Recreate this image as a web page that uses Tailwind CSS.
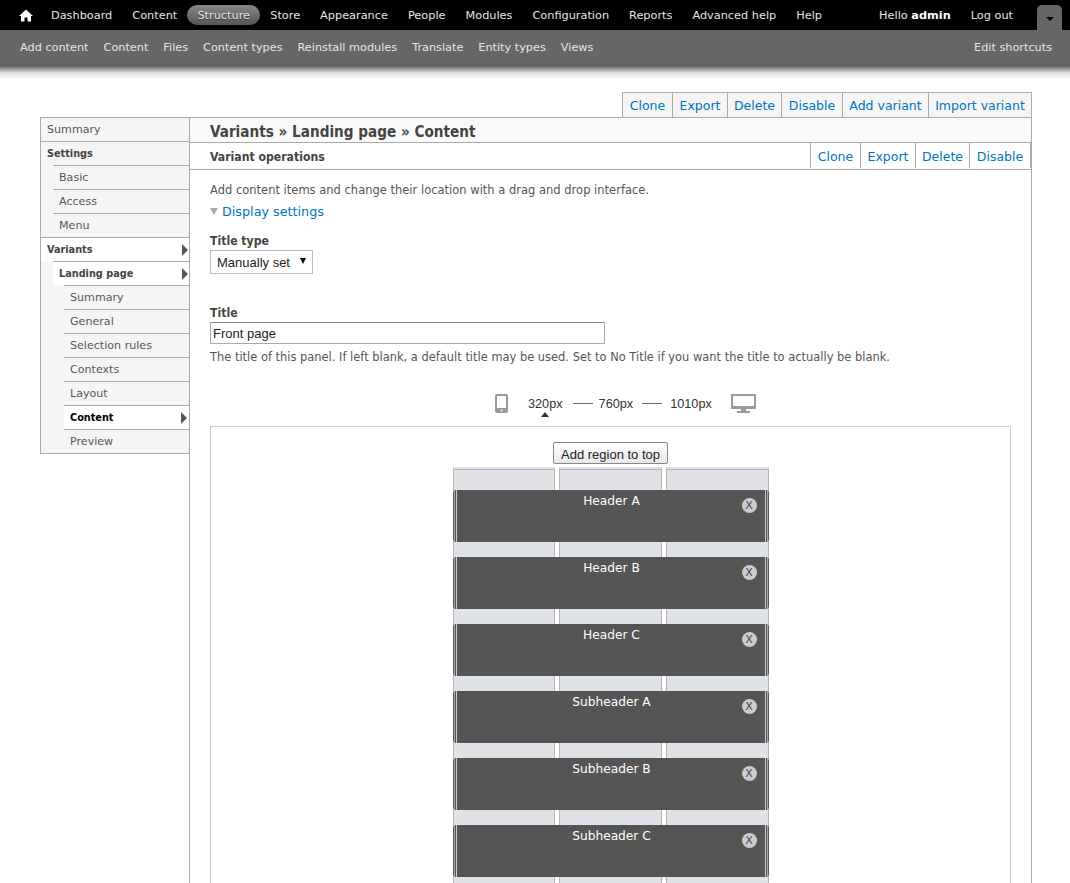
<!DOCTYPE html>
<html lang="en">
<head>
    <meta charset="UTF-8">
    <title>Variants » Landing page » Content</title>
    <script src="https://cdn.jsdelivr.net/npm/@tailwindcss/browser@4"></script>
</head>
<body class="h-[883px] overflow-hidden bg-white font-['DejaVu_Sans',sans-serif] text-[11.5px] text-[#555]">
    <!-- Admin toolbar -->
    <div class="h-[30px] bg-black flex items-center text-[11.3px] text-[#e5e5e5] pl-[19px]">
        <svg class="w-[14px] h-[13px] mr-[18px]" viewBox="0 0 14 13" fill="#fff"><path d="M7 0.5 L14 7 H12 V12.5 H8.5 V8.5 H5.5 V12.5 H2 V7 H0 Z"/></svg>
        <a class="mr-[20px] pt-[2px]">Dashboard</a>
        <a class="mr-[10px] pt-[2px]">Content</a>
        <a class="h-[20px] w-[73px] mr-[10px] pt-[2px] flex items-center justify-center rounded-full bg-gradient-to-b from-[#888] to-[#555] [text-shadow:0_1px_1px_#333]">Structure</a>
        <a class="mr-[20px] pt-[2px]">Store</a>
        <a class="mr-[20px] pt-[2px]">Appearance</a>
        <a class="mr-[20px] pt-[2px]">People</a>
        <a class="mr-[20px] pt-[2px]">Modules</a>
        <a class="mr-[20px] pt-[2px]">Configuration</a>
        <a class="mr-[20px] pt-[2px]">Reports</a>
        <a class="mr-[20px] pt-[2px]">Advanced help</a>
        <a class="pt-[2px]">Help</a>
        <span class="ml-auto pt-[2px]">Hello <b class="font-bold text-white">admin</b></span>
        <a class="ml-[20px] pt-[2px]">Log out</a>
        <div class="ml-[24px] mr-[8px] mt-[5px] w-[25px] h-[25px] bg-[#666] rounded-t-[5px] flex items-center justify-center">
            <div class="w-0 h-0 mt-[3px] border-x-[4px] border-x-transparent border-t-[4px] border-t-black"></div>
        </div>
    </div>
    <div class="h-[35px] bg-[#666] flex items-center text-[11.27px] text-[#e5e5e5] pt-[2px] px-[18px] pl-[20px] gap-[15px]">
        <a>Add content</a>
        <a>Content</a>
        <a>Files</a>
        <a>Content types</a>
        <a>Reinstall modules</a>
        <a>Translate</a>
        <a>Entity types</a>
        <a>Views</a>
        <a class="ml-auto">Edit shortcuts</a>
    </div>
    <div class="h-[15px] bg-gradient-to-b from-[#555] via-[#ddd] via-50% to-white"></div>

    <div class="w-[992px] ml-[40px] mt-[12px]">
        <!-- Top tabs -->
        <div class="flex justify-end">
            <div class="flex h-[25px] border border-b-0 border-[#aaa] bg-[#f5f5f5] text-[12.5px] text-[#0074bd] leading-[25px] divide-x divide-[#aaa]">
                <a class="w-[50px] text-center">Clone</a>
                <a class="w-[55px] text-center">Export</a>
                <a class="w-[54px] text-center">Delete</a>
                <a class="w-[61px] text-center">Disable</a>
                <a class="w-[86px] text-center">Add variant</a>
                <a class="w-[102px] text-center">Import variant</a>
            </div>
        </div>

        <div class="flex items-start border-t border-[#aaa] h-[800px]">
            <!-- Left menu -->
            <div class="w-[149px] shrink-0 bg-[#f5f5f5] border-l border-b border-[#aaa] leading-[23px] text-[11.1px]">
                <div class="h-[24px] pl-[6px] border-b border-[#aaa]">Summary</div>
                <div class="h-[23px] pl-[6px] font-bold text-[10.8px] text-[#444] font-['DejaVu_Sans_Condensed','DejaVu_Sans',sans-serif]">Settings</div>
                <div class="pl-[12px]">
                    <div class="h-[25px] pl-[6px] border-y border-[#aaa]">Basic</div>
                    <div class="h-[24px] pl-[6px] border-b border-[#aaa]">Access</div>
                    <div class="h-[23px] pl-[6px]">Menu</div>
                </div>
                <div class="h-[24px] pl-[6px] border-t border-[#aaa] font-bold text-[10.8px] text-[#444] font-['DejaVu_Sans_Condensed','DejaVu_Sans',sans-serif] bg-white flex justify-between items-center">Variants
                    <div class="w-0 h-0 mr-[1px] border-y-[6px] border-y-transparent border-l-[6px] border-l-[#555]"></div>
                </div>
                <div class="pl-[12px]">
                    <div class="h-[24px] pl-[6px] border-t border-[#aaa] font-bold text-[10.8px] text-[#444] font-['DejaVu_Sans_Condensed','DejaVu_Sans',sans-serif] bg-white flex justify-between items-center">Landing page
                        <div class="w-0 h-0 mr-[1px] border-y-[6px] border-y-transparent border-l-[6px] border-l-[#555]"></div>
                    </div>
                    <div class="pl-[11px]">
                        <div class="h-[25px] pl-[6px] border-y border-[#aaa]">Summary</div>
                        <div class="h-[24px] pl-[6px] border-b border-[#aaa]">General</div>
                        <div class="h-[24px] pl-[6px] border-b border-[#aaa]">Selection rules</div>
                        <div class="h-[24px] pl-[6px] border-b border-[#aaa]">Contexts</div>
                        <div class="h-[24px] pl-[6px] border-b border-[#aaa]">Layout</div>
                        <div class="h-[24px] pl-[6px] border-b border-[#aaa] font-bold text-[10.8px] text-black font-['DejaVu_Sans_Condensed','DejaVu_Sans',sans-serif] bg-white flex justify-between items-center">Content
                            <div class="w-0 h-0 mr-[2px] border-y-[6px] border-y-transparent border-l-[6px] border-l-[#555]"></div>
                        </div>
                        <div class="h-[23px] pl-[6px]">Preview</div>
                    </div>
                </div>
            </div>

            <!-- Main panel -->
            <div class="flex-1 h-full border-l border-r border-[#aaa]">
                <h1 class="h-[25px] pl-[20px] bg-[#f9f9f9] border-b border-[#aaa] text-[15.15px] leading-[28px] font-bold text-[#444] font-['DejaVu_Sans_Condensed','DejaVu_Sans',sans-serif]">Variants » Landing page » Content</h1>
                <div class="flex justify-between h-[27px] border-b border-[#aaa]">
                    <div class="pl-[20px] text-[12.15px] leading-[28px] font-bold text-[#444] font-['DejaVu_Sans_Condensed','DejaVu_Sans',sans-serif]">Variant operations</div>
                    <div class="flex text-[12.5px] text-[#0074bd] leading-[28px] bg-white h-[25px] border-l border-r border-[#aaa] divide-x divide-[#aaa]">
                        <a class="w-[50px] text-center">Clone</a>
                        <a class="w-[55px] text-center">Export</a>
                        <a class="w-[54px] text-center">Delete</a>
                        <a class="w-[60px] text-center">Disable</a>
                    </div>
                </div>

                <div class="px-[20px]">
                    <p class="mt-[12px] leading-[16px]">Add content items and change their location with a drag and drop interface.</p>
                    <div class="mt-[6px] flex items-center gap-[4px] h-[16px]">
                        <div class="w-0 h-0 mb-[2px] border-x-[4px] border-x-transparent border-t-[7px] border-t-[#aaa]"></div>
                        <a class="text-[12.75px] text-[#0074bd]">Display settings</a>
                    </div>

                    <label class="block mt-[13px] leading-[16px] text-[12.15px] font-bold text-[#444] font-['DejaVu_Sans_Condensed','DejaVu_Sans',sans-serif]">Title type</label>
                    <div class="relative mt-[1px] w-[103px]">
                        <select class="block appearance-none w-full h-[24px] pl-[6px] pt-[2px] bg-white border border-[#bbb] text-[13px] text-[#222] font-['Liberation_Sans',sans-serif]">
                            <option>Manually set</option>
                        </select>
                        <div class="absolute right-[7px] top-[8px] w-0 h-0 border-x-[3px] border-x-transparent border-t-[6px] border-t-black"></div>
                    </div>

                    <label class="block mt-[31px] leading-[16px] text-[12.15px] font-bold text-[#444] font-['DejaVu_Sans_Condensed','DejaVu_Sans',sans-serif]">Title</label>
                    <input type="text" value="Front page" class="block mt-[1px] w-[395px] h-[22px] px-[2px] border border-[#aaa] border-t-[#888] text-[13px] text-[#222] font-['Liberation_Sans',sans-serif]">
                    <p class="mt-[5px] leading-[16px] text-[11.45px]">The title of this panel. If left blank, a default title may be used. Set to No Title if you want the title to actually be blank.</p>

                    <!-- Breakpoint switcher -->
                    <div class="mt-[27px] h-[28px] pl-[285px] flex items-start text-[12.7px] text-[#333] font-['Liberation_Sans',sans-serif]">
                        <svg class="w-[13px] h-[19px] mt-[2px] mr-[20px]" viewBox="0 0 13 19"><rect width="13" height="19" rx="2" fill="#999"/><rect x="2" y="2" width="9" height="12" fill="#fff"/><circle cx="6.5" cy="16.5" r="1" fill="#fff"/></svg>
                        <div class="relative mt-[4px] leading-[16px]">320px
                            <div class="absolute left-[13px] top-[16px] w-0 h-0 border-x-[4px] border-x-transparent border-b-[5px] border-b-[#333]"></div>
                        </div>
                        <div class="w-[20px] h-px bg-[#666] ml-[10px] mr-[6px] mt-[11px]"></div>
                        <div class="mt-[4px] leading-[16px]">760px</div>
                        <div class="w-[20px] h-px bg-[#666] ml-[9px] mr-[8px] mt-[11px]"></div>
                        <div class="mt-[4px] leading-[16px]">1010px</div>
                        <svg class="w-[25px] h-[19px] mt-[2px] ml-[19px]" viewBox="0 0 25 19"><rect width="25" height="15" rx="1" fill="#999"/><rect x="2" y="2" width="21" height="10" fill="#fff"/><rect x="10" y="15" width="5" height="2" fill="#999"/><rect x="6" y="17" width="13" height="2" fill="#999"/></svg>
                    </div>

                    <!-- Layout canvas -->
                    <div class="w-[801px] mt-[6px] h-[600px] border border-[#ccc] flex flex-col items-center">
                        <button class="mt-[15px] w-[115px] h-[22px] pt-[2px] border border-[#888] rounded-[2px] bg-gradient-to-b from-white to-[#e8e8e8] text-[13px] text-[#222] font-['Liberation_Sans',sans-serif]">Add region to top</button>
                        <div class="relative w-[316px] mt-[3px] h-[500px]">
                            <div class="absolute inset-0 grid grid-cols-[102px_103px_103px] gap-x-[4px]">
                                <div class="bg-[#dfe2e6] border-x border-t-2 border-x-[#b5b5b5] border-t-[#e3e3e3] shadow-[inset_0_1px_0_#b5b5b5]"></div>
                                <div class="bg-[#dfe2e6] border-x border-t-2 border-x-[#b5b5b5] border-t-[#e3e3e3] shadow-[inset_0_1px_0_#b5b5b5]"></div>
                                <div class="bg-[#dfe2e6] border-x border-t-2 border-x-[#b5b5b5] border-t-[#e3e3e3] shadow-[inset_0_1px_0_#b5b5b5]"></div>
                            </div>
                            <div class="relative pt-[23px] flex flex-col gap-[15px] text-[12.2px] text-white text-center">
                                <div class="relative h-[52px] pl-[2px] bg-[#555] rounded-[4px] leading-[22px] overflow-hidden">Header A
                                    <div class="absolute left-0 top-0 bottom-0 w-[5px] bg-[linear-gradient(90deg,#555_0_1px,#aaa_1px_2px,#555_2px_3px,#ccc_3px_4px,#555_4px)]"></div>
                                    <div class="absolute right-0 top-0 bottom-0 w-[5px] bg-[linear-gradient(270deg,#555_0_1px,#aaa_1px_2px,#555_2px_3px,#ccc_3px_4px,#555_4px)]"></div>
                                    <div class="absolute right-[12px] top-[8px] w-[15px] h-[15px] rounded-full bg-[#ccc] text-[#446] text-[11px] leading-[15px]">X</div>
                                </div>
                                <div class="relative h-[52px] pl-[2px] bg-[#555] rounded-[4px] leading-[22px] overflow-hidden">Header B
                                    <div class="absolute left-0 top-0 bottom-0 w-[5px] bg-[linear-gradient(90deg,#555_0_1px,#aaa_1px_2px,#555_2px_3px,#ccc_3px_4px,#555_4px)]"></div>
                                    <div class="absolute right-0 top-0 bottom-0 w-[5px] bg-[linear-gradient(270deg,#555_0_1px,#aaa_1px_2px,#555_2px_3px,#ccc_3px_4px,#555_4px)]"></div>
                                    <div class="absolute right-[12px] top-[8px] w-[15px] h-[15px] rounded-full bg-[#ccc] text-[#446] text-[11px] leading-[15px]">X</div>
                                </div>
                                <div class="relative h-[52px] pl-[2px] bg-[#555] rounded-[4px] leading-[22px] overflow-hidden">Header C
                                    <div class="absolute left-0 top-0 bottom-0 w-[5px] bg-[linear-gradient(90deg,#555_0_1px,#aaa_1px_2px,#555_2px_3px,#ccc_3px_4px,#555_4px)]"></div>
                                    <div class="absolute right-0 top-0 bottom-0 w-[5px] bg-[linear-gradient(270deg,#555_0_1px,#aaa_1px_2px,#555_2px_3px,#ccc_3px_4px,#555_4px)]"></div>
                                    <div class="absolute right-[12px] top-[8px] w-[15px] h-[15px] rounded-full bg-[#ccc] text-[#446] text-[11px] leading-[15px]">X</div>
                                </div>
                                <div class="relative h-[52px] pl-[2px] bg-[#555] rounded-[4px] leading-[22px] overflow-hidden">Subheader A
                                    <div class="absolute left-0 top-0 bottom-0 w-[5px] bg-[linear-gradient(90deg,#555_0_1px,#aaa_1px_2px,#555_2px_3px,#ccc_3px_4px,#555_4px)]"></div>
                                    <div class="absolute right-0 top-0 bottom-0 w-[5px] bg-[linear-gradient(270deg,#555_0_1px,#aaa_1px_2px,#555_2px_3px,#ccc_3px_4px,#555_4px)]"></div>
                                    <div class="absolute right-[12px] top-[8px] w-[15px] h-[15px] rounded-full bg-[#ccc] text-[#446] text-[11px] leading-[15px]">X</div>
                                </div>
                                <div class="relative h-[52px] pl-[2px] bg-[#555] rounded-[4px] leading-[22px] overflow-hidden">Subheader B
                                    <div class="absolute left-0 top-0 bottom-0 w-[5px] bg-[linear-gradient(90deg,#555_0_1px,#aaa_1px_2px,#555_2px_3px,#ccc_3px_4px,#555_4px)]"></div>
                                    <div class="absolute right-0 top-0 bottom-0 w-[5px] bg-[linear-gradient(270deg,#555_0_1px,#aaa_1px_2px,#555_2px_3px,#ccc_3px_4px,#555_4px)]"></div>
                                    <div class="absolute right-[12px] top-[8px] w-[15px] h-[15px] rounded-full bg-[#ccc] text-[#446] text-[11px] leading-[15px]">X</div>
                                </div>
                                <div class="relative h-[52px] pl-[2px] bg-[#555] rounded-[4px] leading-[22px] overflow-hidden">Subheader C
                                    <div class="absolute left-0 top-0 bottom-0 w-[5px] bg-[linear-gradient(90deg,#555_0_1px,#aaa_1px_2px,#555_2px_3px,#ccc_3px_4px,#555_4px)]"></div>
                                    <div class="absolute right-0 top-0 bottom-0 w-[5px] bg-[linear-gradient(270deg,#555_0_1px,#aaa_1px_2px,#555_2px_3px,#ccc_3px_4px,#555_4px)]"></div>
                                    <div class="absolute right-[12px] top-[8px] w-[15px] h-[15px] rounded-full bg-[#ccc] text-[#446] text-[11px] leading-[15px]">X</div>
                                </div>
                            </div>
                        </div>
                    </div>
                </div>
            </div>
        </div>
    </div>
</body>
</html>
